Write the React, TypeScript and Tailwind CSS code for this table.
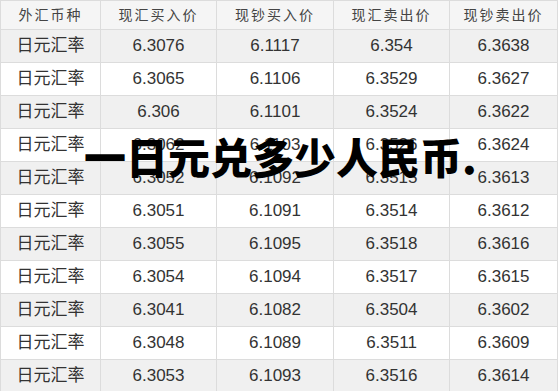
const headers = ["外汇币种", "现汇买入价", "现钞买入价", "现汇卖出价", "现钞卖出价"]

const rows = [
  ["6.3076", "6.1117", "6.354", "6.3638"],
  ["6.3065", "6.1106", "6.3529", "6.3627"],
  ["6.306", "6.1101", "6.3524", "6.3622"],
  ["6.3062", "6.1103", "6.3526", "6.3624"],
  ["6.3052", "6.1092", "6.3515", "6.3613"],
  ["6.3051", "6.1091", "6.3514", "6.3612"],
  ["6.3055", "6.1095", "6.3518", "6.3616"],
  ["6.3054", "6.1094", "6.3517", "6.3615"],
  ["6.3041", "6.1082", "6.3504", "6.3602"],
  ["6.3048", "6.1089", "6.3511", "6.3609"],
  ["6.3053", "6.1093", "6.3516", "6.3614"],
]

const cols = "grid grid-cols-[100px_116px_117px_116px_1fr]"

export default function App() {
  return (
    <div className="relative h-[391px] w-[558px] overflow-hidden bg-white font-['Liberation_Sans','Noto_Sans_CJK_SC',sans-serif] text-[#333]">
      <div className="border-l border-t border-[#dcdcdc]">
        <div className={`${cols} bg-[#f5f5f5]`}>
          {headers.map((h) => (
            <div
              key={h}
              className="flex h-[29px] items-center justify-center border-b border-r border-[#dcdcdc] text-[14px] tracking-[2px] text-[#444]"
            >
              {h}
            </div>
          ))}
        </div>
        {rows.map((r, i) => (
          <div key={i} className={`${cols} ${i % 2 === 0 ? "bg-[#f0f0f0]" : "bg-white"}`}>
            <div className="flex h-[33px] items-center justify-center border-b border-r border-[#dcdcdc] text-[17px]">
              日元汇率
            </div>
            {r.map((v, j) => (
              <div
                key={j}
                className="flex h-[33px] items-center justify-center border-b border-r border-[#dcdcdc] text-[17px]"
              >
                {v}
              </div>
            ))}
          </div>
        ))}
      </div>

      <div className="absolute left-[84px] top-[135px] whitespace-nowrap font-['Noto_Sans_CJK_SC',sans-serif] text-[42px] font-black leading-none text-black">
        一日元兑多少人民币.
      </div>
    </div>
  )
}
